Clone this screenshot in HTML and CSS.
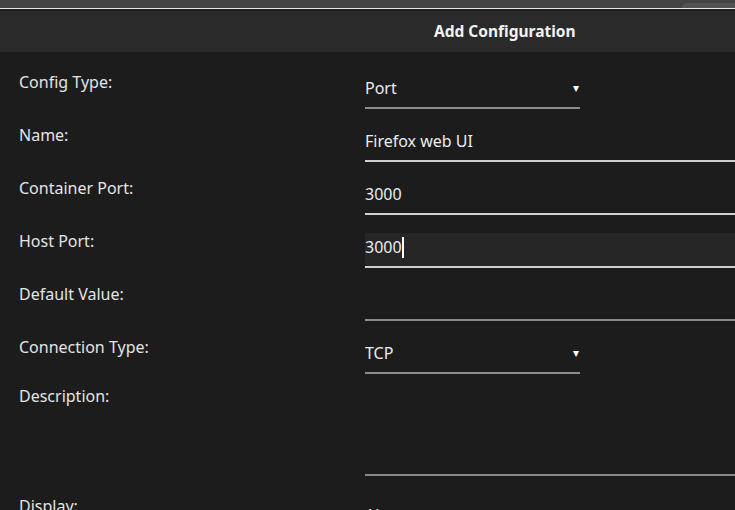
FILE: index.html
```html
<!DOCTYPE html>
<html lang="en">
<head>
    <meta charset="UTF-8">
    <meta name="viewport" content="width=device-width, initial-scale=1.0">
    <title>Add Configuration</title>
    <link rel="stylesheet" href="styles.css">
</head>
<body>
    <div class="topbar">
        <div class="tab"></div>
    </div>
    <div class="header">
        <h1>Add Configuration</h1>
    </div>

    <form class="config-form">
        <div class="row">
            <label>Config Type:</label>
            <div class="select">
                <span>Port</span>
                <span class="arrow">&#9662;</span>
            </div>
        </div>
        <div class="row">
            <label>Name:</label>
            <div class="input">Firefox web UI</div>
        </div>
        <div class="row">
            <label>Container Port:</label>
            <div class="input">3000</div>
        </div>
        <div class="row">
            <label>Host Port:</label>
            <div class="input focused">3000<span class="caret"></span></div>
        </div>
        <div class="row">
            <label>Default Value:</label>
            <div class="input empty"></div>
        </div>
        <div class="row">
            <label>Connection Type:</label>
            <div class="select">
                <span>TCP</span>
                <span class="arrow">&#9662;</span>
            </div>
        </div>
        <div class="row description">
            <label>Description:</label>
            <div class="input textarea"></div>
        </div>
        <div class="row display">
            <label>Display:</label>
            <div class="select">
                <span>Always</span>
                <span class="arrow">&#9662;</span>
            </div>
        </div>
    </form>
</body>
</html>
```

FILE: styles.css
```css
body {
    margin: 0;
    background-color: #1c1c1c;
    color: #e8e8e8;
    font-family: 'Noto Sans', sans-serif;
    font-size: 16px;
    overflow: hidden;
}

.topbar {
    height: 8px;
    background-color: #444;
    border-bottom: 1px solid #e6e6e6;
    position: relative;
}

.topbar .tab {
    position: absolute;
    right: 0;
    top: 3px;
    width: 53px;
    height: 5px;
    background-color: #525252;
    border-top-left-radius: 6px;
}

.header {
    height: 41px;
    background-color: #2a2a2a;
    border-top: 2px solid #1f1f1f;
}

h1 {
    margin: 0;
    padding-left: 434px;
    font-size: 15.5px;
    font-weight: bold;
    line-height: 41px;
    color: #f2f2f2;
}

.config-form {
    padding: 22px 0 0 19px;
    display: flex;
    flex-direction: column;
    gap: 18px;
}

.row {
    display: grid;
    grid-template-columns: 346px 1fr;
}

.row label {
    margin-top: -3px;
    line-height: 22px;
    color: #e4e4e4;
}

.row.description {
    margin-top: -4px;
}

.row.display {
    margin-top: 4px;
}

.row.display .select {
    padding-top: 3px;
}

.input,
.select {
    height: 35px;
    line-height: 28px;
    box-sizing: border-box;
    color: #ececec;
    border-bottom: 2px solid #cfcfcf;
    margin-right: -20px;
}

.input.empty,
.input.textarea {
    border-bottom-color: #8a8a8a;
}

.input.textarea {
    height: 88px;
}

.input.focused {
    background-color: #262626;
}

.caret {
    display: inline-block;
    width: 2px;
    height: 21px;
    background-color: #fff;
    vertical-align: -5px;
}

.select {
    width: 215px;
    display: flex;
    justify-content: space-between;
    border-bottom-color: #8c8c8c;
}

.arrow {
    font-size: 12px;
    color: #fff;
    padding-right: 1px;
}
```
